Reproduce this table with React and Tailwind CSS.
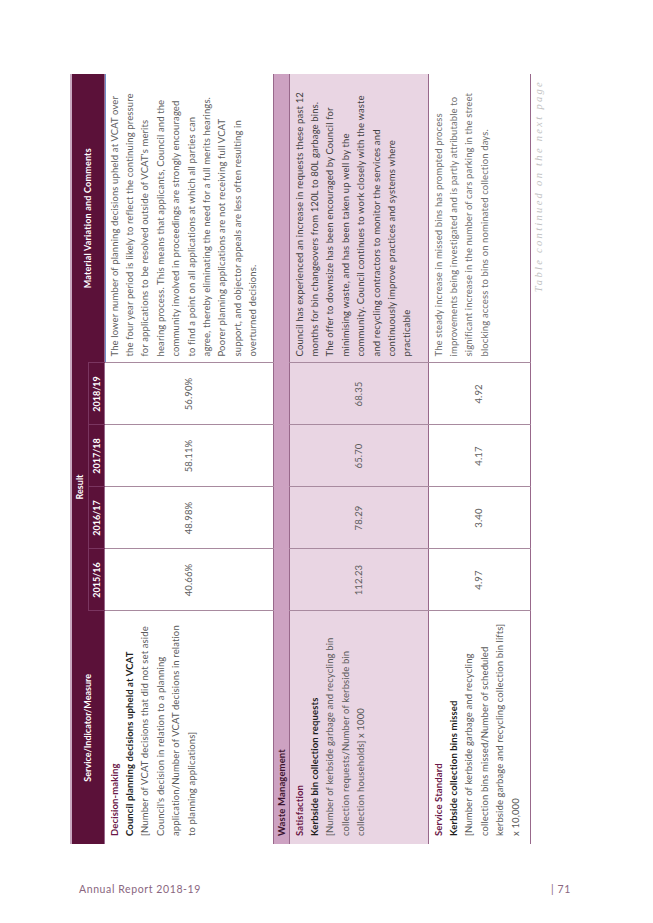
import React from 'react';

// rows of the (rotated) performance table
const rows = [
  {
    kind: 'data',
    bg: 'bg-white',
    h: 'h-[169px]',
    service: {
      group: 'Decision-making',
      title: 'Council planning decisions upheld at VCAT',
      desc: [
        '[Number of VCAT decisions that did not set aside',
        "Council's decision in relation to a planning",
        'application/Number of VCAT decisions in relation',
        'to planning applications]',
      ],
    },
    values: ['40.66%', '48.98%', '58.11%', '56.90%'],
    comments: [
      'The lower number of planning decisions upheld at VCAT over',
      'the four year period is likely to reflect the continuing pressure',
      "for applications to be resolved outside of VCAT's merits",
      'hearing process.  This means that applicants, Council and the',
      'community involved in proceedings are strongly encouraged',
      'to find a point on all applications at which all parties can',
      'agree, thereby eliminating the need for a full merits hearings.',
      'Poorer planning applications are not receiving full VCAT',
      'support, and objector appeals are less often resulting in',
      'overturned decisions.',
    ],
    commentColor: 'text-[#5e5e5e]',
    first: true,
  },
  { kind: 'section', title: 'Waste Management' },
  {
    kind: 'data',
    bg: 'bg-[#e9d5e3]',
    h: 'h-[139px]',
    service: {
      group: 'Satisfaction',
      title: 'Kerbside bin collection requests',
      desc: [
        '[Number of kerbside garbage and recycling bin',
        'collection requests/Number of kerbside bin',
        'collection households] x 1000',
      ],
    },
    values: ['112.23', '78.29', '65.70', '68.35'],
    comments: [
      'Council has experienced an increase in requests these past 12',
      'months for bin changeovers from 120L to 80L garbage bins.',
      'The offer to downsize has been encouraged by Council for',
      'minimising waste, and has been taken up well by the',
      'community. Council continues to work closely with the waste',
      'and recycling contractors to monitor the services and',
      'continuously improve practices and systems where',
      'practicable',
    ],
    commentColor: 'text-[#3f3f3f]',
  },
  {
    kind: 'data',
    bg: 'bg-white',
    h: 'h-[102px]',
    service: {
      group: 'Service Standard',
      title: 'Kerbside collection bins missed',
      desc: [
        '[Number of kerbside garbage and recycling',
        'collection bins missed/Number of scheduled',
        'kerbside garbage and recycling collection bin lifts]',
        'x 10,000',
      ],
    },
    values: ['4.97', '3.40', '4.17', '4.92'],
    comments: [
      'The steady increase in missed bins has prompted process',
      'improvements being investigated and is partly attributable to',
      'significant increase in the number of cars parking in the street',
      'blocking access to bins on nominated collection days.',
    ],
    commentColor: 'text-[#6e6e6e]',
  },
];

const years = ['2015/16', '2016/17', '2017/18', '2018/19'];

const Lines = ({ items }) =>
  items.map((l, i) => (
    <div key={i} className="whitespace-nowrap">
      {l}
    </div>
  ));

const PerformanceTable = () => (
  <table className="w-[770px] table-fixed border-collapse">
    <colgroup>
      <col className="w-[233px]" />
      <col className="w-[62px]" />
      <col className="w-[62px]" />
      <col className="w-[62px]" />
      <col className="w-[62px]" />
      <col className="w-[289px]" />
    </colgroup>
    <thead className="text-[9px] font-bold text-white">
      <tr className="h-[17px] border-t-2 border-[#c9a9c1]">
        <th rowSpan={2} className="bg-[#5b1139] text-center align-middle">
          Service/Indicator/Measure
        </th>
        <th colSpan={4} className="bg-[#5b1139] border-b border-[#7a3560] text-center leading-none">
          Result
        </th>
        <th rowSpan={2} className="bg-[#5b1139] text-center align-middle tracking-[0.2px]">
          Material Variation and Comments
        </th>
      </tr>
      <tr className="h-[16px]">
        {years.map((y) => (
          <th key={y} className="bg-[#5b1139] border-x border-[#7a3560] text-center leading-none">
            {y}
          </th>
        ))}
      </tr>
    </thead>
    <tbody className="text-[9.5px] leading-[15.4px] tracking-[0.12px]">
      {rows.map((r, i) =>
        r.kind === 'section' ? (
          <tr key={i} className="h-[15px] bg-[#cda2c2] border-y border-[#98688b]">
            <td colSpan={6} className="px-[8px] py-0 font-bold text-[#3d1530] leading-[15px] align-middle">
              {r.title}
            </td>
          </tr>
        ) : (
          <tr key={i} className={`${r.h} ${r.bg} border-y border-[#98688b]`}>
            <td className="align-top pl-[8px] pt-[2px] border-r border-[#a88a9f]">
              <div className="font-bold text-[#6a1747]">{r.service.group}</div>
              <div className="font-bold text-[#1e1e1e]">{r.service.title}</div>
              <div className="text-[#5a5a5a]">
                <Lines items={r.service.desc} />
              </div>
            </td>
            {r.values.map((v, j) => (
              <td key={j} className="align-middle text-center text-[#5e5e5e] border-r border-[#a88a9f]">
                {v}
              </td>
            ))}
            <td
              className={`align-top pl-[6px] pt-[2px] ${r.commentColor} ${
                r.first ? 'shadow-[inset_0_1px_0_#6f8fc9]' : ''
              }`}
            >
              <Lines items={r.comments} />
            </td>
          </tr>
        )
      )}
    </tbody>
  </table>
);

export default function App() {
  return (
    <div className="w-[653px] h-[923px] bg-white font-['Lato','Liberation_Sans',sans-serif] overflow-hidden">
      {/* landscape table turned to read bottom-up */}
      <div className="ml-[70px] pt-[74px] w-[474px] h-[844px]">
        <div className="w-[770px] origin-top-left -rotate-90 translate-y-[770px]">
          <div className="border-r border-[#c6a8be] w-[770px]">
            <PerformanceTable />
          </div>
          <div className="h-[16px] pr-[6px] text-right text-[10.5px] italic tracking-[2.3px] text-[#c2c2c2] font-['Liberation_Serif',serif] leading-[16px]">
            Table continued on the next page
          </div>
        </div>
      </div>

      <div className="flex justify-between pl-[79px] pr-[82px] mt-[38px] text-[10.5px] text-[#8a6680] tracking-[0.6px]">
        <span>Annual Report 2018-19</span>
        <span>| 71</span>
      </div>
    </div>
  );
}
